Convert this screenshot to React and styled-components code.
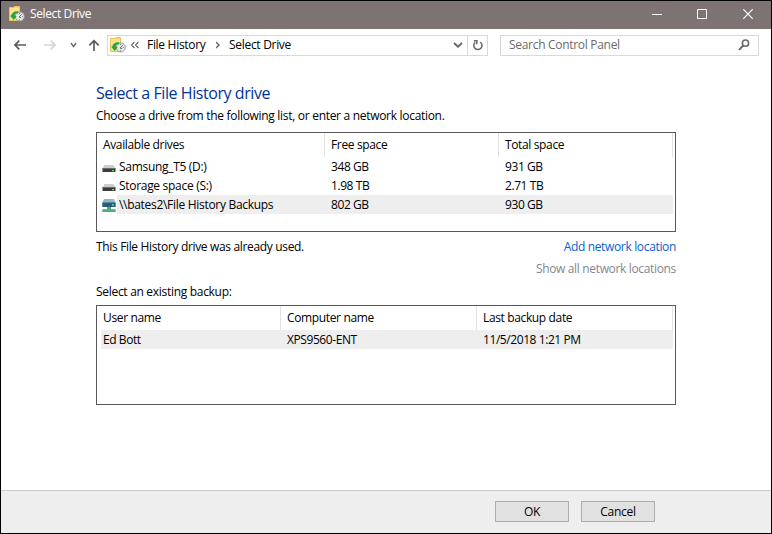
import React from 'react';
import styled, { createGlobalStyle } from 'styled-components';

const GlobalStyle = createGlobalStyle`
  * { box-sizing: border-box; }
  body { margin: 0; background: #fff; }
  svg { display: block; flex: none; }
`;

const Window = styled.div`
  width: 772px;
  height: 534px;
  border: 1px solid #000;
  background: #fff;
  display: flex;
  flex-direction: column;
  overflow: hidden;
  font: 12px/18px "Open Sans", "Noto Sans", sans-serif;
  font-stretch: 92%;
  letter-spacing: -0.3px;
  color: #000;
  white-space: nowrap;
`;

const TitleBar = styled.header`
  height: 28px;
  flex: none;
  display: flex;
  align-items: center;
  padding-left: 8px;
  background: #7d7373;
  color: #fff;
`;

const TitleIcon = styled.span`
  margin-top: -3px;
`;

const Title = styled.span`
  flex: 1;
  margin: -3px 0 0 5px;
  letter-spacing: -0.38px;
`;

const CaptionButton = styled.button`
  width: 46px;
  height: 28px;
  padding: 0 0 3px;
  border: 0;
  background: none;
  color: #fff;
  display: flex;
  align-items: center;
  justify-content: center;
`;

const NavBar = styled.nav`
  height: 33px;
  flex: none;
  display: flex;
  align-items: center;
  padding: 0 12px 1px 11px;
`;

const ArrowSet = styled.div`
  width: 95px;
  display: flex;
  align-items: center;
  padding-left: 1px;
  & > :nth-child(2) { margin-left: 16px; }
  & > :nth-child(3) { margin-left: 13px; }
  & > :nth-child(4) { margin-left: 11px; }
`;

const Field = styled.div`
  height: 21px;
  width: ${(p) => p.$width}px;
  border: 1px solid #d9d9d9;
  display: flex;
  align-items: center;
`;

const AddressField = styled(Field)`
  padding-left: 2px;
  margin-right: 12px;
`;

const SearchField = styled(Field)`
  padding: 0 8px 0 8px;
  justify-content: space-between;
  color: #6a6a6a;
`;

const Crumb = styled.span`
  width: ${(p) => p.$width}px;
`;

const Spacer = styled.span`
  flex: 1;
`;

const RefreshCell = styled.span`
  width: 20px;
  height: 19px;
  margin-left: 4px;
  border-left: 1px solid #d9d9d9;
  display: flex;
  align-items: center;
  justify-content: center;
`;

const Content = styled.main`
  flex: 1;
  width: 580px;
  margin-left: 95px;
  padding-top: 19px;
`;

const Heading = styled.h1`
  margin: 0;
  height: 26px;
  font-size: 16px;
  line-height: 25px;
  font-weight: 400;
  letter-spacing: -0.43px;
  color: #003399;
`;

const Paragraph = styled.p`
  margin: 0;
  height: ${(p) => p.$height}px;
`;

const List = styled.div`
  height: 100px;
  border: 1px solid #58585a;
  padding-right: 2px;
`;

const columns = (p) => p.$columns;

const ListHeader = styled.div`
  height: 24px;
  display: grid;
  grid-template-columns: ${columns};
`;

const HeaderCell = styled.div`
  padding: 3px 0 0 6px;
  border-right: 1px solid #e2e2e2;
  letter-spacing: -0.36px;
`;

const Row = styled.div`
  height: 19px;
  display: grid;
  grid-template-columns: ${columns};
  background: ${(p) =>
    p.$selected
      ? `linear-gradient(#eee, #eee) ${p.$inset}px 0 / 100% 100% no-repeat`
      : 'none'};
`;

const Cell = styled.div`
  padding-left: ${(p) => (p.$icon ? 5 : 6)}px;
  display: flex;
  align-items: center;
  gap: 3px;
  line-height: 19px;
  letter-spacing: ${(p) => (p.$icon ? -0.3 : -0.42)}px;
`;

const StatusRow = styled.div`
  height: 51px;
  padding-top: 6px;
  display: flex;
  justify-content: space-between;
  letter-spacing: -0.34px;
`;

const Links = styled.div`
  display: flex;
  flex-direction: column;
  align-items: flex-end;
  gap: 4px;
`;

const Link = styled.a`
  color: ${(p) => (p.$muted ? '#838790' : '#0a62cc')};
`;

const Footer = styled.footer`
  height: 43px;
  flex: none;
  border-top: 1px solid #c9c9c9;
  background: #eee;
  display: flex;
  justify-content: flex-end;
  gap: 12px;
  padding: 10px 116px 0 0;
`;

const Button = styled.button`
  width: 74px;
  height: 21px;
  padding: 0;
  border: 1px solid #adadad;
  background: #e1e1e1;
  font: inherit;
  letter-spacing: inherit;
  line-height: 18px;
  color: #000;
`;

function HistoryIcon() {
  return (
    <svg width="16" height="16" viewBox="0 0 16 16">
      <path d="M.5 1.5h4l1-1h5v14H.5z" fill="#f6d66f" stroke="#e6c25c" />
      <path d="M1 2h9v12H1z" fill="#ffe28b" />
      <circle cx="10.8" cy="10.5" r="4.5" fill="#e8e8e8" stroke="#999" strokeWidth="1" />
      <path d="M10 11l2.7-2.6M10 11l2 .7M10.5 7v.8M10.5 13.4v.8M13.8 10.5h-.7" stroke="#666" fill="none" />
      <path d="M2.2 9.6C3 6.3 5.7 4.6 9.3 5.3L8.8 7.2C6.6 7 5.8 8.2 5.8 10h2L4.6 14 1 9.6z" fill="#24a83a" />
    </svg>
  );
}

function BackIcon({ color, flip }) {
  return (
    <svg width="14" height="12" viewBox="0 0 14 12">
      <path transform={flip ? 'translate(14 0) scale(-1 1)' : undefined}
        d="M13 6H2M6.3 1.6L1.9 6l4.4 4.4" fill="none" stroke={color} strokeWidth="1.7" />
    </svg>
  );
}

function ChevronIcon({ size, weight, color = '#666' }) {
  return (
    <svg width={size} height="6" viewBox={`0 0 ${size} 6`}>
      <path d={`M1 1L${size / 2} 4.6L${size - 1} 1`} fill="none" stroke={color} strokeWidth={weight} />
    </svg>
  );
}

function DriveIcon() {
  return (
    <svg width="14" height="16" viewBox="0 0 14 16">
      <path d="M2.5 6h9L13.5 9.5H.5z" fill="#cdcdcd" />
      <path d="M.5 9h13v4H.5z" fill="#3c3c3c" />
      <path d="M.5 9h13v.8H.5z" fill="#777" />
      <path d="M10 11h2v1.2h-2z" fill="#59e45a" />
    </svg>
  );
}

function NetworkDriveIcon() {
  return (
    <svg width="14" height="16" viewBox="0 0 14 16">
      <path d="M2 2h10l1.7 4H.3z" fill="#8fb8cf" />
      <path d="M.3 5.5h13.4V10H.3z" fill="#2b5b78" />
      <path d="M10 7.2h2v1.2h-2z" fill="#65e8d5" />
      <path d="M5 10h4v2.3h4.7V15H.3v-2.7H5z" fill="#4eaa80" />
    </svg>
  );
}

const drives = [
  { name: 'Samsung_T5 (D:)', free: '348 GB', total: '931 GB', icon: DriveIcon },
  { name: 'Storage space (S:)', free: '1.98 TB', total: '2.71 TB', icon: DriveIcon },
  { name: '\\\\bates2\\File History Backups', free: '802 GB', total: '930 GB', icon: NetworkDriveIcon, selected: true },
];
const DRIVE_COLUMNS = '228px 174px 174px';
const BACKUP_COLUMNS = '184px 196px 196px';

export default function App() {
  return (
    <>
      <GlobalStyle />
      <Window>
        <TitleBar>
          <TitleIcon><HistoryIcon /></TitleIcon>
          <Title>Select Drive</Title>
          <CaptionButton aria-label="Minimize">
            <svg width="12" height="10" viewBox="0 0 12 10"><path d="M2 5.5h10" stroke="currentColor" /></svg>
          </CaptionButton>
          <CaptionButton aria-label="Maximize">
            <svg width="10" height="10" viewBox="0 0 10 10"><path d="M.5.5h9v9h-9z" fill="none" stroke="currentColor" /></svg>
          </CaptionButton>
          <CaptionButton aria-label="Close">
            <svg width="10" height="10" viewBox="0 0 10 10"><path d="M.3.3l9.4 9.4M9.7.3L.3 9.7" stroke="currentColor" strokeWidth="1.2" /></svg>
          </CaptionButton>
        </TitleBar>

        <NavBar>
          <ArrowSet>
            <BackIcon color="#5c5c5c" />
            <BackIcon color="#d5d5d5" flip />
            <ChevronIcon size={7} weight={1.4} />
            <svg width="12" height="12" viewBox="0 0 12 12">
              <path d="M6 12V2M1.3 6.3L6 1.6l4.7 4.7" fill="none" stroke="#5c5c5c" strokeWidth="1.7" />
            </svg>
          </ArrowSet>
          <AddressField $width={381}>
            <HistoryIcon />
            <svg width="21" height="8" viewBox="0 0 21 8">
              <path d="M8.5 1L5.5 4l3 3M12.5 1l-3 3 3 3" fill="none" stroke="#666" strokeWidth="1.1" />
            </svg>
            <Crumb $width={69}>File History</Crumb>
            <svg width="13" height="8" viewBox="0 0 13 8">
              <path d="M0 1l3 3-3 3" fill="none" stroke="#666" strokeWidth="1.4" />
            </svg>
            <Crumb $width={80}>Select Drive</Crumb>
            <Spacer />
            <ChevronIcon size={10} weight={1.9} />
            <RefreshCell>
              <svg width="12" height="13" viewBox="0 0 12 13">
                <path d="M3.2 3.3A4.1 4.1 0 1 0 8.2 3M2 1.8h2.8v3.5" fill="none" stroke="#666" strokeWidth="1.5" />
              </svg>
            </RefreshCell>
          </AddressField>
          <SearchField $width={259}>
            <Crumb $width={120}>Search Control Panel</Crumb>
            <svg width="12" height="12" viewBox="0 0 12 12">
              <circle cx="7.5" cy="4.2" r="3.1" fill="none" stroke="#666" strokeWidth="1.5" />
              <path d="M5.3 6.5L1 10.8" stroke="#666" strokeWidth="1.9" />
            </svg>
          </SearchField>
        </NavBar>

        <Content>
          <Heading>Select a File History drive</Heading>
          <Paragraph $height={25}>Choose a drive from the following list, or enter a network location.</Paragraph>
          <List>
            <ListHeader $columns={DRIVE_COLUMNS}>
              <HeaderCell>Available drives</HeaderCell>
              <HeaderCell>Free space</HeaderCell>
              <HeaderCell>Total space</HeaderCell>
            </ListHeader>
            {drives.map(({ name, free, total, icon: Icon, selected }) => (
              <Row key={name} $columns={DRIVE_COLUMNS} $selected={selected} $inset={20}>
                <Cell $icon><Icon />{name}</Cell>
                <Cell>{free}</Cell>
                <Cell>{total}</Cell>
              </Row>
            ))}
          </List>
          <StatusRow>
            <span>This File History drive was already used.</span>
            <Links>
              <Link>Add network location</Link>
              <Link $muted>Show all network locations</Link>
            </Links>
          </StatusRow>
          <Paragraph $height={22}>Select an existing backup:</Paragraph>
          <List>
            <ListHeader $columns={BACKUP_COLUMNS}>
              <HeaderCell>User name</HeaderCell>
              <HeaderCell>Computer name</HeaderCell>
              <HeaderCell>Last backup date</HeaderCell>
            </ListHeader>
            <Row $columns={BACKUP_COLUMNS} $selected $inset={4}>
              <Cell>Ed Bott</Cell>
              <Cell>XPS9560-ENT</Cell>
              <Cell>11/5/2018 1:21 PM</Cell>
            </Row>
          </List>
        </Content>

        <Footer>
          <Button>OK</Button>
          <Button>Cancel</Button>
        </Footer>
      </Window>
    </>
  );
}
